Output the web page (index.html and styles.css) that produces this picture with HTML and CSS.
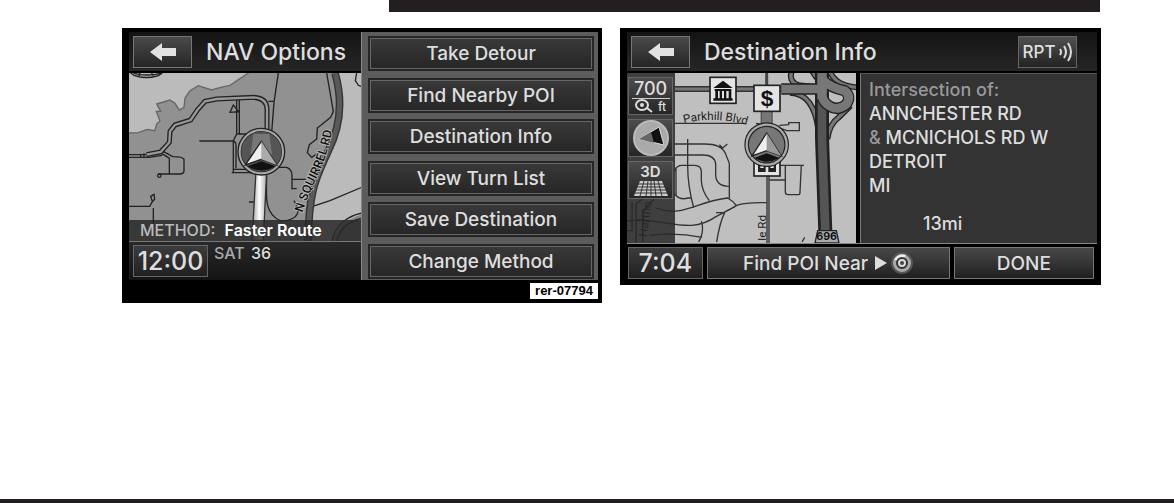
FILE: index.html
```
<!DOCTYPE html>
<html lang="en">
  <head>
    <meta charset="UTF-8" />
    <meta name="viewport" content="width=device-width, initial-scale=1.0" />
    <title>Navigation</title>
    <link rel="stylesheet" href="styles.css">
  </head>
  <body>
    <div class="top-bar"></div>

    <main class="screens">
      <!-- NAV Options -->
      <section class="screen">
        <div class="nav-body">
          <div class="nav-left">
            <header class="screen-header">
              <button class="back-btn" aria-label="Back">
                <svg viewBox="0 0 28 20" width="28" height="20"><path d="M1 10 13 1v5h14v8H13v5z" fill="#e2e2e2" /></svg>
              </button>
              <h1 class="title">NAV Options</h1>
            </header>
            <div class="map">
              <svg class="map-art" viewBox="27 147 696 504" preserveAspectRatio="xMidYMid slice">
                <defs>
                  <linearGradient id="route" x1="0" x2="1">
                    <stop offset="0" stop-color="#999" />
                    <stop offset="0.5" stop-color="#fff" />
                    <stop offset="1" stop-color="#aaa" />
                  </linearGradient>
                  <path id="squirrel" d="M548 566Q560 522 590 462T634 330" />
                </defs>
                <rect x="0" y="120" width="800" height="560" fill="#919191" />
                <path d="M27 327 55 326 82 316 104 320 110 300 120 290 109 262 122 262 110 240 150 228 165 238 178 258 192 250 195 222 210 200 235 185 275 198 302 190 330 184 385 147V120H0v207z" fill="#bbb" stroke="#666" stroke-width="4" />
                <path d="M645 147C672 240 655 320 625 380 595 450 565 490 565 660H760V120H645z" fill="#bbb" />
                <path d="M638 651c20-50 50-68 90-80v90z" fill="#888" />
                <g fill="none" stroke="#222" stroke-width="4">
                  <path d="M32 147c20 18 75 18 95 0M40 147c18 8 65 8 82 0M60 147l-4 12M95 147l6 12" />
                  <path d="M475 147 462 235 455 325M445 232h18" />
                  <path d="M620 147 640 262 632 280 592 312 590 345 568 362 562 386 575 400 590 390" />
                  <path d="M350 225V330L340 350V445M358 225V330M340 436h55M335 446h60V436M238 351h98q12 0 12 12v70M330 265l10-22 16 20zM352 330h60" />
                  <path d="M27 392h52l50-8M27 400h60l40-6M62 390v10M72 388v12M82 386v12M125 388l25 16M130 382l28 16q30 0 34 8v36q-2 8-12 8h-65M148 402v46" />
                  <path d="M27 547h62l8-14-5-16 10-6 2 14-8 10M100 552v60M387 534h20" />
                  <path d="M440 455c0 60-10 110 40 135h20c40-10 40-30 22-60M470 430h30q16 6 16 24v40h14M518 466h40M560 553 630 530 725 490" />
                  <path d="M636 651c10-50 50-76 90-84M650 651c12-44 45-62 76-68" />
                  <path d="M710 147 706 170 715 184 725 188" />
                  <circle cx="118" cy="455" r="5" />
                </g>
                <path d="M80 392 122 384 148 355 150 322 165 303 212 288 232 258 255 232 290 225 400 220Q442 222 441 258V330" fill="none" stroke="#222" stroke-width="15" />
                <path d="M80 392 122 384 148 355 150 322 165 303 212 288 232 258 255 232 290 225 400 220Q442 222 441 258V330" fill="none" stroke="#999" stroke-width="7" />
                <path d="M645 147C672 240 655 320 625 380 595 450 565 490 565 651" fill="none" stroke="#333" stroke-width="23" />
                <path d="M645 147C672 240 655 320 625 380 595 450 565 490 565 651" fill="none" stroke="#595959" stroke-width="15" />
                <path d="M408 440h32L430 651H396z" fill="url(#route)" stroke="#333" stroke-width="4" />
                <text class="street"><textPath href="#squirrel">N SQUIRREL RD</textPath></text>
                <circle cx="424" cy="383" r="66" fill="#555" stroke="#222" stroke-width="12" />
                <circle cx="424" cy="383" r="65" fill="none" stroke="#aaa" stroke-width="6" />
                <path d="M400 330h48l8 60h-64z" fill="#777" />
                <path d="M382 427 424 412 466 427Q424 452 382 427z" fill="#111" />
                <path d="M424 352 376 423 424 406 470 423z" fill="#eee" stroke="#222" stroke-width="4" />
                <path d="M424 352V406L470 423z" fill="#aaa" />
              </svg>
              <div class="method"><span>METHOD:</span> <strong>Faster Route</strong></div>
            </div>
            <div class="status">
              <div class="clock">12:00</div>
              <div class="radio"><span>SAT</span> <b>36</b></div>
            </div>
          </div>
          <nav class="menu">
            <button>Take Detour</button>
            <button>Find Nearby POI</button>
            <button>Destination Info</button>
            <button>View Turn List</button>
            <button>Save Destination</button>
            <button>Change Method</button>
          </nav>
        </div>
        <div class="figure-id">rer-07794</div>
      </section>

      <!-- Destination Info -->
      <section class="screen">
        <header class="screen-header">
          <button class="back-btn" aria-label="Back">
            <svg viewBox="0 0 28 20" width="28" height="20"><path d="M1 10 13 1v5h14v8H13v5z" fill="#e2e2e2" /></svg>
          </button>
          <h1 class="title">Destination Info</h1>
          <button class="rpt-btn">RPT
            <svg viewBox="0 0 14 20" width="14" height="20" fill="none" stroke="#ddd" stroke-width="2"><path d="M1 7q2 3 0 6M5 4q4 6 0 12M9 1q6 9 0 18" /></svg>
          </button>
        </header>
        <div class="dest-body">
          <div class="map">
            <svg class="map-art" viewBox="33 147 687 510" preserveAspectRatio="xMidYMid slice">
              <defs>
                <path id="parkhill" d="M204 298Q310 272 420 312" />
                <g id="ramps" fill="none">
                  <path d="M522 206Q560 208 580 236T606 310" />
                  <path d="M704 245 668 280Q640 300 634 345" />
                  <path d="M640 140Q656 176 690 184T730 190" />
                  <path d="M528 140Q516 172 548 184L600 190M588 140Q606 170 618 176" />
                </g>
                <path id="loop" d="M618 166Q645 192 686 200 708 218 690 242 664 262 640 246 622 236 618 215" />
              </defs>
              <rect x="0" y="120" width="800" height="560" fill="#bfbfbf" />
              <g fill="none" stroke="#333" stroke-width="4">
                <path d="M176 298h210M420 298l70 10M490 304l28-2v-6h32v24h-38l-20-8" />
                <path d="M176 360h90q50 0 62 28l12 30v106M320 372l14-12M320 372l-10-10M215 345V425q0 60 18 126M176 393h85q36 0 38 28v30q0 36 40 36" />
                <path d="M176 440q6-16 22-16h38q20 0 20 20v26q2 32 24 60M176 510q16 20 40 12h10M180 430v84" />
                <path d="M120 552c80 30 120-20 215-30 14 8 20 14 26 22M60 586c120 10 170 40 240-8 20-12 40-20 62-34 30-10 60-8 90-8M300 566h26M326 566q-15 30-24 88M256 592q10 30-8 62M100 634q80-10 158 6M558 654l8-14" />
                <path d="M458 424h106M508 424v80q0 8 8 8h32q4 0 4-8l4-80M460 468h48" />
                <path d="M24 620h24V535M60 654V540l50-40M80 654V560l55-55M24 590h80" />
              </g>
              <g fill="none">
                <path d="M176 195H520" stroke="#333" stroke-width="18" />
                <path d="M176 195H520" stroke="#777" stroke-width="9" />
                <path d="M452 147v50" stroke="#444" stroke-width="9" />
                <path d="M452 230v100" stroke="#444" stroke-width="36" />
                <path d="M452 230v100" stroke="#777" stroke-width="30" />
                <path d="M456 440V657" stroke="#333" stroke-width="10" />
                <path d="M456 440V657" stroke="#888" stroke-width="3" />
                <use href="#ramps" stroke="#222" stroke-width="18" />
                <use href="#ramps" stroke="#777" stroke-width="10" />
                <path d="M618 147V340L628 625" stroke="#222" stroke-width="42" />
                <path d="M618 147V340L628 625" stroke="#555" stroke-width="26" />
                <use href="#loop" stroke="#222" stroke-width="34" />
                <path d="M496 195H620" stroke="#222" stroke-width="34" />
                <path d="M618 140V226" stroke="#777" stroke-width="28" />
                <use href="#loop" stroke="#777" stroke-width="26" />
                <path d="M496 195H632" stroke="#777" stroke-width="26" />
              </g>
              <path d="M605 620h56l8 37H597z" fill="#aaa" stroke="#222" stroke-width="4" />
              <text x="632" y="648" class="shield">696</text>
              <text class="street-small"><textPath href="#parkhill">Parkhill Blvd</textPath></text>
              <text class="street-small" transform="translate(451 650) rotate(-90)">le Rd</text>
              <text class="street-small" transform="translate(92 640) rotate(-82)">Hartho</text>
              <!-- bank, cash and station markers -->
              <g stroke="#222" stroke-width="5" fill="#e4e4e4">
                <rect x="282" y="160" width="78" height="78" />
                <rect x="414" y="184" width="78" height="78" />
                <rect x="414" y="390" width="78" height="66" />
              </g>
              <path d="M292 192 321 170 350 192zM296 195h50v6h-50zM298 201h8v22h-8zM311 201h7v22h-7zM324 201h7v22h-7zM338 201h8v22h-8zM292 223h58v7h-58z" fill="#111" />
              <text x="453" y="247" class="dollar">$</text>
              <path d="M426 418h54v26H426z" fill="#222" />
              <path d="M433 424h10v8h-10zM463 424h10v8h-10zM449 424h8v20h-8z" fill="#e4e4e4" />
              <circle cx="452" cy="362" r="60" fill="#777" stroke="#222" stroke-width="14" />
              <circle cx="452" cy="362" r="60" fill="none" stroke="#aaa" stroke-width="7" />
              <path d="M415 402 452 388 490 402Q452 424 415 402z" fill="#111" />
              <path d="M452 327 408 396 452 380 496 396z" fill="#eee" stroke="#222" stroke-width="4" />
              <path d="M452 327V380L496 396z" fill="#999" />
            </svg>
            <div class="map-tools">
              <button class="tool" aria-label="Zoom 700 ft">
                <span class="scale">700</span>
                <span class="unit">
                  <svg viewBox="0 0 18 14" width="18" height="14" fill="none" stroke="#ddd" stroke-width="2"><ellipse cx="7" cy="6" rx="6" ry="5" /><circle cx="7" cy="6" r="2" fill="#ddd" stroke="none" /><path d="m12 9 5 4" /></svg>
                  ft
                </span>
              </button>
              <button class="tool" aria-label="Compass">
                <svg viewBox="0 0 36 36" width="36" height="36"><circle cx="18" cy="18" r="17" fill="#aaa" stroke="#bbb" stroke-width="2" /><path d="M6 19 26 7l5 18z" fill="#111" stroke="#ddd" /><path d="M6 19 18 12l3 11z" fill="#666" /></svg>
              </button>
              <button class="tool" aria-label="3D view">
                <span class="three-d">3D</span>
                <svg viewBox="0 0 36 16" width="36" height="16"><path d="M7 0h22l6 15H1z" fill="#ccc" /><path d="M5 3h26M4 6h28M3 9h30M1 12h34M11 0 7 15M15 0l-2 15M18 0v15M21 0l2 15M25 0l4 15" stroke="#333" /></svg>
              </button>
            </div>
          </div>
          <div class="info">
            <p class="label">Intersection of:</p>
            <p>ANNCHESTER RD</p>
            <p><span class="label">&amp;</span> MCNICHOLS RD W</p>
            <p>DETROIT</p>
            <p>MI</p>
            <p class="distance">13mi</p>
          </div>
        </div>
        <footer class="actions">
          <div class="clock">7:04</div>
          <button>Find POI Near
            <svg viewBox="0 0 38 24" width="38" height="24"><path d="M0 5 12 12 0 19z" fill="#ddd" /><circle cx="27" cy="12" r="10" fill="#aaa" stroke="#555" stroke-width="2" /><path d="M19 9q4-7 12-5l-3 5z" fill="#eee" /><circle cx="27" cy="12" r="5" fill="#ddd" stroke="#333" stroke-width="2" /><circle cx="27" cy="12" r="2" fill="#444" /></svg>
          </button>
          <button>DONE</button>
        </footer>
      </section>
    </main>

    <div class="bottom-bar"></div>
  </body>
</html>
```
FILE: styles.css
```
* {
  box-sizing: border-box;
}
body {
  margin: 0;
  min-height: 100vh;
  display: flex;
  flex-direction: column;
  background: #fff;
  font-family: Inter, "Noto Sans", sans-serif;
  font-weight: 500;
  color: #dedede;
}
button {
  font: inherit;
  color: inherit;
  padding: 0;
  cursor: pointer;
  display: flex;
  align-items: center;
  justify-content: center;
}
.top-bar {
  height: 12px;
  margin: 0 74px 0 389px;
  background: #231f20;
}
.bottom-bar {
  height: 4px;
  margin-top: auto;
  background: #231f20;
}
.screens {
  display: grid;
  grid-template-columns: 480fr 481fr;
  align-items: start;
  gap: 18px;
  margin: 16px 73px 16px 122px;
}
.screen {
  background: #000;
  padding: 4px 4px 4px 7px;
}
.nav-body {
  display: grid;
  grid-template-columns: 1fr 237px;
}
.nav-left {
  display: flex;
  flex-direction: column;
}
.screen-header {
  display: flex;
  align-items: center;
  gap: 14px;
  height: 41px;
  padding-left: 4px;
  background: linear-gradient(#141414, #262626);
  border-bottom: 2px solid #000;
}
.back-btn {
  width: 59px;
  height: 32px;
  background: linear-gradient(#4a4a4a, #252525);
  border: 1px solid #777;
}
.title {
  margin: 0;
  font-size: 23px;
  line-height: 32px;
  font-weight: 500;
  white-space: nowrap;
}
.rpt-btn {
  width: 59px;
  height: 32px;
  gap: 3px;
  margin: 0 20px 0 auto;
  font-size: 17px;
  background: linear-gradient(#505050, #222);
  border: 1px solid #666;
}
.map {
  position: relative;
  height: 168px;
  overflow: hidden;
}
.map-art {
  display: block;
  width: 100%;
  height: 100%;
}
.street {
  font: 500 37px Roboto, sans-serif;
  fill: #111;
  stroke: #bbb;
  stroke-width: 5px;
  paint-order: stroke;
}
.street-small {
  font: 35px Roboto, sans-serif;
  fill: #222;
}
.shield {
  font: bold 32px Inter, sans-serif;
  text-anchor: middle;
  fill: #111;
}
.dollar {
  font: bold 68px "Liberation Sans", sans-serif;
  text-anchor: middle;
  fill: #111;
}
.method {
  position: absolute;
  left: 0;
  right: 0;
  bottom: 0;
  padding-left: 11px;
  font-size: 16px;
  line-height: 21px;
  white-space: pre;
  background: rgba(40, 40, 40, 0.85);
}
.method span {
  color: #bbb;
}
.method strong {
  margin-left: 5px;
  font-weight: 600;
  color: #fff;
}
.status {
  display: flex;
  gap: 6px;
  height: 39px;
  padding: 3px 4px;
  border-top: 1px solid #777;
  background: linear-gradient(#292929, #141414);
}
.clock {
  width: 75px;
  height: 32px;
  font-size: 25px;
  line-height: 30px;
  text-align: center;
  background: linear-gradient(#3c3c3c, #202020);
  border: 1px solid #666;
}
.radio {
  font-size: 16px;
  line-height: 16px;
}
.radio span {
  color: #aaa;
}
.radio b {
  font-weight: 500;
  margin-left: 2px;
}
.menu {
  display: flex;
  flex-direction: column;
  justify-content: space-between;
  padding: 4px 4px 1px 6px;
  background: #5c5c5c;
  border-left: 1px solid #888;
}
.menu button {
  height: 35px;
  font-size: 19px;
  background: linear-gradient(#393939, #262626);
  border: 2px solid #262626;
  outline: 1px solid #666;
  outline-offset: -3px;
}
.figure-id {
  width: 68px;
  margin: 3px 0 0 auto;
  font: bold 13px/16px "Liberation Sans", Arial, sans-serif;
  text-align: center;
  color: #000;
  background: #fff;
}
.dest-body {
  display: grid;
  grid-template-columns: 229fr 237fr;
  gap: 4px;
}
.dest-body .map {
  height: 170px;
}
.map-tools {
  position: absolute;
  top: 0;
  left: 0;
  bottom: 0;
  width: 48px;
  display: flex;
  flex-direction: column;
  gap: 4px;
  padding: 4px 2px 0 1px;
  background: rgba(40, 40, 40, 0.85);
}
.tool {
  height: 38px;
  flex-direction: column;
  background: linear-gradient(#4c4c4c, #262626);
  border: 1px solid #666;
}
.scale {
  width: 38px;
  font-size: 18px;
  line-height: 19px;
  border-bottom: 1px solid #ccc;
}
.unit {
  display: flex;
  align-items: center;
  gap: 5px;
  font-size: 12px;
  line-height: 15px;
}
.three-d {
  font-size: 15px;
  line-height: 18px;
  font-weight: 600;
}
.info {
  padding: 4px 8px 0;
  background: #333;
  border-left: 1px solid #777;
  border-top: 1px solid #555;
  font-size: 18px;
  line-height: 24px;
}
.info p {
  margin: 0;
}
.info .label {
  color: #999;
}
.info .distance {
  padding: 14px 0 0 54px;
}
.actions {
  display: grid;
  grid-template-columns: 75fr 244fr 141fr;
  gap: 4px;
  padding: 3px 3px 2px 1px;
  border-top: 1px solid #888;
}
.actions .clock {
  width: auto;
}
.actions button {
  gap: 7px;
  font-size: 19px;
  background: linear-gradient(#484848, #202020);
  border: 1px solid #777;
}
```
